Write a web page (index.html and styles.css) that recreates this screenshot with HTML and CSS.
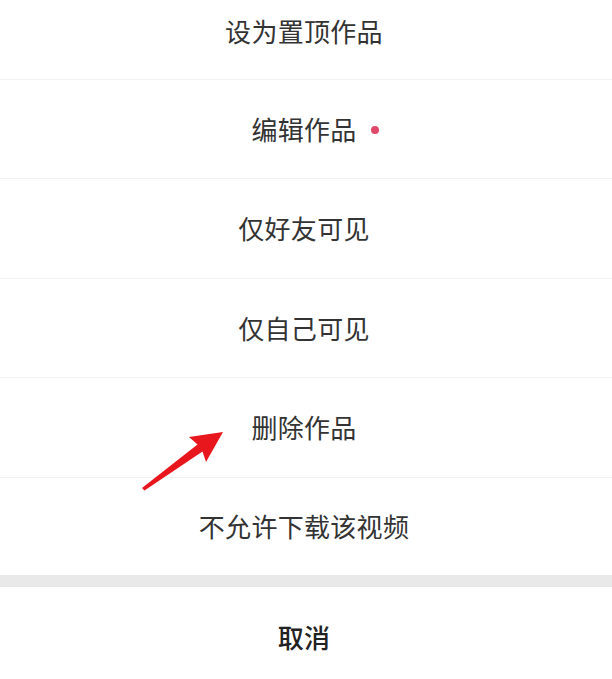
FILE: index.html
```html
<!DOCTYPE html>
<html lang="zh-CN">
<head>
<meta charset="utf-8">
<title>作品操作</title>
<link rel="stylesheet" href="styles.css">
</head>
<body>
<div class="sheet">
  <div class="options">
    <div class="row row-first"><span class="label">设为置顶作品</span></div>
    <div class="row"><span class="label">编辑作品<i class="dot"></i></span></div>
    <div class="row"><span class="label">仅好友可见</span></div>
    <div class="row"><span class="label">仅自己可见</span></div>
    <div class="row"><span class="label">删除作品</span></div>
    <div class="row row-last"><span class="label">不允许下载该视频</span></div>
  </div>
  <div class="gap"></div>
  <div class="row cancel"><span class="label">取消</span></div>
</div>
<svg class="arrow" width="612" height="679" viewBox="0 0 612 679" aria-hidden="true">
  <polygon points="223,432 189,437 197.5,444.5 142,488 144.5,490.5 202.5,451.5 206,462" fill="#e8161d"/>
</svg>
</body>
</html>
```

FILE: styles.css
```css
html, body {
  margin: 0;
  padding: 0;
  background: #ffffff;
}
body {
  width: 612px;
  height: 679px;
  overflow: hidden;
  position: relative;
  font-family: "Noto Sans CJK SC", "Noto Sans", sans-serif;
  color: #333333;
}
.sheet {
  display: flex;
  flex-direction: column;
}
.options {
  display: flex;
  flex-direction: column;
}
.row {
  box-sizing: border-box;
  height: 99.5px;
  display: flex;
  align-items: center;
  justify-content: center;
  padding-right: 4px;
  border-bottom: 1px solid #f1f1f1;
}
.row-first {
  margin-top: -20px;
  padding-top: 4px;
}
.row-last {
  height: 97.5px;
  border-bottom: none;
}
.label {
  font-size: 26px;
  line-height: 1;
  letter-spacing: 0.3px;
  position: relative;
}
.dot {
  position: absolute;
  left: calc(100% + 14px);
  top: 50%;
  width: 8px;
  height: 8px;
  margin-top: -3px;
  border-radius: 50%;
  background: #e2486a;
}
.gap {
  height: 12px;
  background: #e9e9e9;
}
.cancel {
  height: 100px;
  border-bottom: none;
}
.cancel .label {
  font-weight: 500;
  color: #222222;
}
.arrow {
  position: absolute;
  left: 0;
  top: 0;
  pointer-events: none;
}
```
